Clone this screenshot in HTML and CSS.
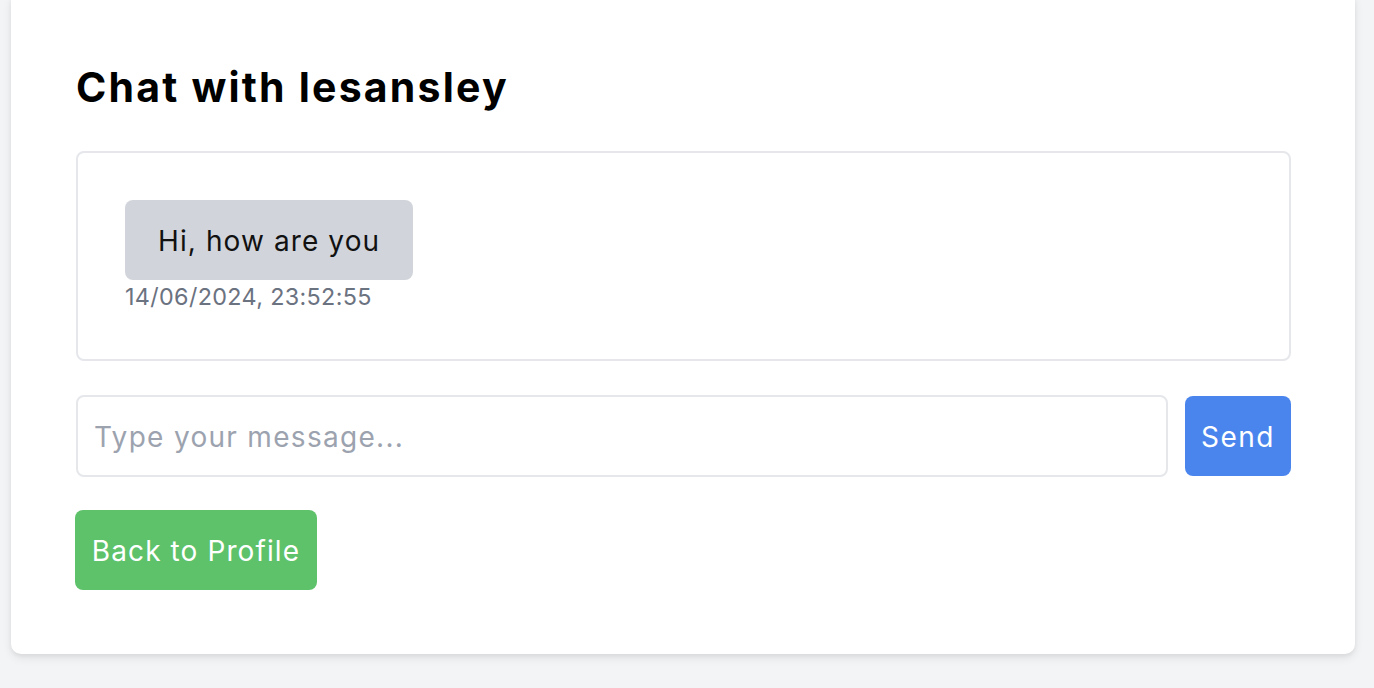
FILE: index.html
```html
<!DOCTYPE html>
<html lang="en">
<head>
<meta charset="utf-8">
<title>Chat with lesansley</title>
<link rel="stylesheet" href="styles.css">
</head>
<body>
  <main class="card">
    <h1 class="title">Chat with lesansley</h1>
    <section class="chat-box">
      <div class="message">
        <div class="bubble">Hi, how are you</div>
        <div class="time">14/06/2024, 23:52:55</div>
      </div>
    </section>
    <form class="composer">
      <input class="input" type="text" placeholder="Type your message...">
      <button class="btn btn-send" type="button">Send</button>
    </form>
    <button class="btn btn-back" type="button">Back to Profile</button>
  </main>
</body>
</html>
```

FILE: styles.css
```css
* { box-sizing: border-box; }

html, body {
  margin: 0;
  padding: 0;
  background: #f3f4f6;
  font-family: Inter, "Noto Sans", "Liberation Sans", sans-serif;
  color: #000;
  height: 100%;
  overflow: hidden;
}

.card {
  width: 1344px;
  margin: -3px 0 0 11px;
  padding: 64px 64px 64px 65px;
  background: #fff;
  border-radius: 0 0 10px 10px;
  box-shadow: 0 4px 10px rgba(0, 0, 0, 0.08), 0 2px 4px rgba(0, 0, 0, 0.05);
}

.title {
  margin: 0 0 37px;
  font-size: 41px;
  line-height: 53.33px;
  font-weight: 700;
  letter-spacing: 2.2px;
}

.chat-box {
  border: 2px solid #e5e7eb;
  border-radius: 8px;
  padding: 47px;
  height: 210px;
}

.message {
  display: flex;
  flex-direction: column;
  align-items: flex-start;
}

.bubble {
  background: #d1d5db;
  border-radius: 8px;
  padding: 21px 33px 19px;
  font-size: 28px;
  line-height: 40px;
  letter-spacing: 1.1px;
  color: #111;
}

.time {
  font-size: 23.33px;
  line-height: 33.33px;
  letter-spacing: 0.35px;
  color: #6b7280;
}

.composer {
  display: flex;
  align-items: center;
  gap: 17px;
  margin: 34px 0 33px;
}

.input {
  flex: 1;
  height: 82px;
  border: 2px solid #e5e7eb;
  border-radius: 8px;
  padding: 2px 16px 0;
  font-family: inherit;
  font-size: 28px;
  letter-spacing: 1.3px;
  color: #111;
  outline: none;
}

.input::placeholder { color: #9ca3af; }

.btn {
  border: none;
  border-radius: 8px;
  height: 80px;
  padding: 2px 0 0;
  font-family: inherit;
  font-size: 28px;
  line-height: 40px;
  color: #fff;
  cursor: pointer;
}

.btn-send {
  background: #4a85ee;
  width: 106px;
  letter-spacing: 1.5px;
}

.btn-back {
  display: block;
  background: #5dc26a;
  width: 242px;
  margin-left: -1px;
  letter-spacing: 1.1px;
}
```
